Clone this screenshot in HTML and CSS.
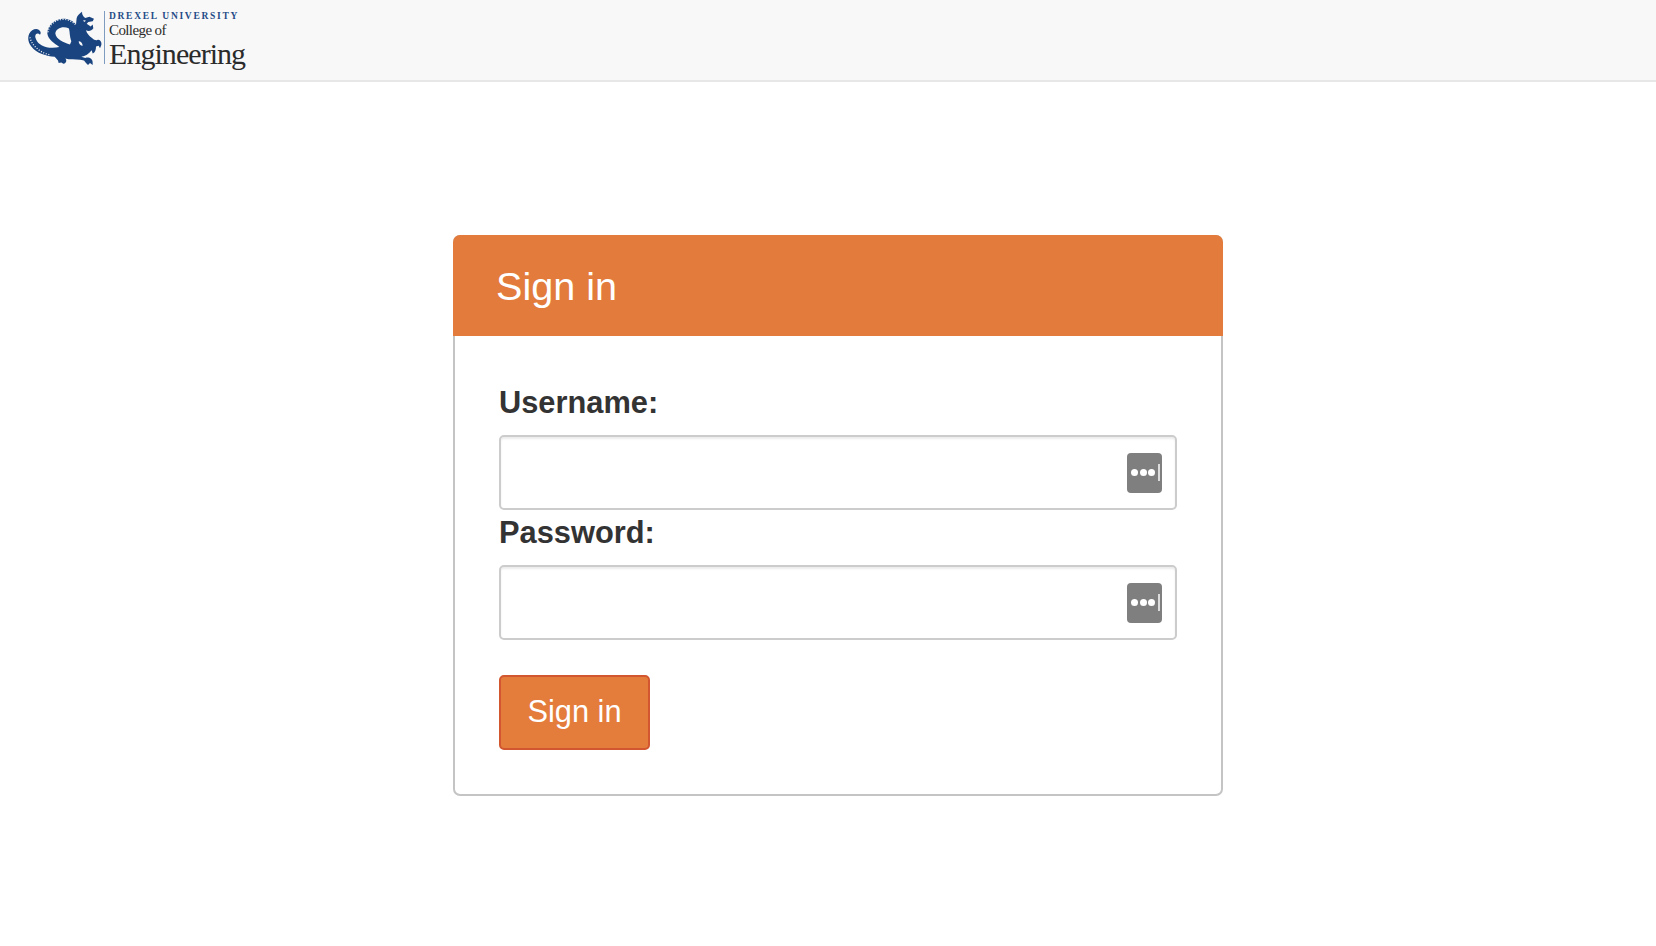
FILE: index.html
```html
<!DOCTYPE html>
<html lang="en">
<head>
<meta charset="utf-8">
<title>Sign in</title>
<link rel="stylesheet" href="styles.css">
</head>
<body>
<header class="navbar">
  <a class="brand" href="#">
    <svg class="dragon" viewBox="24 18 225 171" preserveAspectRatio="none" aria-hidden="true">
      <path fill="#1a4480" d="M60 92C54 84 44 88 46 100C50 118 66 130 88 132C100 133 110 132 118 130C104 118 84 108 82 88C82 62 105 42 130 42C148 42 160 50 168 60L170 40C172 32 178 26 186 20C186 30 190 35 196 40L208 36L222 42L218 50L205 52L200 58L212 66L218 60L220 72C214 82 204 82 198 78C200 88 208 96 216 102C222 108 228 110 232 108C240 106 246 114 244 124L240 134L236 126L228 128C228 138 226 146 218 150L215 140C206 152 196 158 184 160L196 164C206 160 218 166 218 178L218 186L210 180L204 186L198 180L192 172C178 168 160 168 146 168L136 166C142 172 138 182 130 182L124 178L116 180L114 172L104 160C80 158 50 150 34 128C24 116 22 100 28 88C33 76 48 70 56 76C62 80 64 86 60 92Z"/>
      <path fill="#f8f8f8" d="M106 88C108 72 128 64 146 72C150 80 148 96 154 112L150 122C132 116 108 106 106 88ZM176 112C182 112 188 118 188 126C182 126 176 120 176 112ZM190 46L198 48L192 52Z"/>
      <path class="dragon-scales" d="M84 84C86 62 106 44 130 44C146 44 158 52 166 60M30 100C34 122 56 146 88 154"/>
    </svg>
    <span class="brand-text">
      <span class="brand-univ">DREXEL UNIVERSITY</span>
      <span class="brand-college">College of</span>
      <span class="brand-eng">Engineering</span>
    </span>
  </a>
</header>
<main class="panel">
  <h1 class="panel-heading">Sign in</h1>
  <form class="panel-body">
    <label class="field-label" for="username">Username:</label>
    <div class="field">
      <input class="field-input" id="username" type="text">
      <span class="keychain" aria-hidden="true"><i></i><i></i><i></i><b></b></span>
    </div>
    <label class="field-label" for="password">Password:</label>
    <div class="field">
      <input class="field-input" id="password" type="password">
      <span class="keychain" aria-hidden="true"><i></i><i></i><i></i><b></b></span>
    </div>
    <button class="submit" type="button">Sign in</button>
  </form>
</main>
</body>
</html>
```
FILE: styles.css
```css
* { box-sizing: border-box; }
html, body { margin: 0; height: 100%; }
body {
  background: #fff;
  color: #333;
  font-family: "Liberation Sans", Arial, sans-serif;
}
.navbar {
  height: 82px;
  background: #f8f8f8;
  border-bottom: 2px solid #e7e7e7;
  padding: 11px 0 0 28px;
}
.brand {
  display: flex;
  align-items: flex-start;
  text-decoration: none;
}
.dragon { width: 75px; height: 55px; flex: none; }
.dragon-scales {
  fill: none;
  stroke: #f8f8f8;
  stroke-width: 4;
  stroke-dasharray: 3 5;
}
.brand-text {
  display: flex;
  flex-direction: column;
  margin-left: 1px;
  padding-left: 4px;
  border-left: 1px solid #7e9cc0;
  height: 53px;
  font-family: "Liberation Serif", "Times New Roman", serif;
  color: #2b2b2b;
}
.brand-univ {
  font-size: 9.5px;
  font-weight: 700;
  line-height: 10px;
  letter-spacing: 1.7px;
  color: #1f4b87;
  white-space: nowrap;
}
.brand-college {
  font-size: 15px;
  line-height: 16px;
  margin-top: 1px;
  letter-spacing: -0.6px;
  white-space: nowrap;
}
.brand-eng {
  font-size: 30px;
  line-height: 30px;
  margin-top: 1px;
  letter-spacing: -0.95px;
  white-space: nowrap;
}
.panel {
  width: 770px;
  margin: 153px 0 0 453px;
  border: 2px solid #c4c4c4;
  border-radius: 7px;
}
.panel-heading {
  margin: -2px -2px 0;
  height: 101px;
  padding: 1px 0 0 43px;
  background: #e27b3c;
  border-radius: 7px 7px 0 0;
  color: #fff;
  font-size: 39.6px;
  font-weight: 400;
  line-height: 100px;
}
.panel-body {
  display: flex;
  flex-direction: column;
  align-items: flex-start;
  padding: 49px 44px 44px;
}
.field-label {
  font-size: 30.8px;
  font-weight: 700;
  line-height: 35px;
  margin-bottom: 15px;
}
.field {
  position: relative;
  width: 100%;
  height: 75px;
}
.field + .field-label { margin-top: 5px; }
.field-input {
  display: block;
  width: 100%;
  height: 100%;
  border: 2px solid #ccc;
  border-radius: 5px;
  background: #fff;
  box-shadow: inset 0 2px 2px rgba(0,0,0,.075);
  outline: none;
}
.keychain {
  position: absolute;
  top: 18px;
  right: 15px;
  width: 35px;
  height: 40px;
  display: flex;
  align-items: center;
  gap: 1.5px;
  padding: 0 0 2px 4px;
  background: #7f7f7f;
  border-radius: 4px;
}
.keychain i {
  width: 7px;
  height: 7px;
  border-radius: 50%;
  background: #fff;
}
.keychain b {
  width: 2px;
  height: 17px;
  margin-left: 1.5px;
  background: #dcdcdc;
}
.submit {
  margin-top: 35px;
  width: 151px;
  height: 75px;
  padding: 0;
  background: #e47c3b;
  border: 2px solid #d2562f;
  border-radius: 5px;
  color: #fff;
  font-family: inherit;
  font-size: 30.8px;
  line-height: 1;
}
```
